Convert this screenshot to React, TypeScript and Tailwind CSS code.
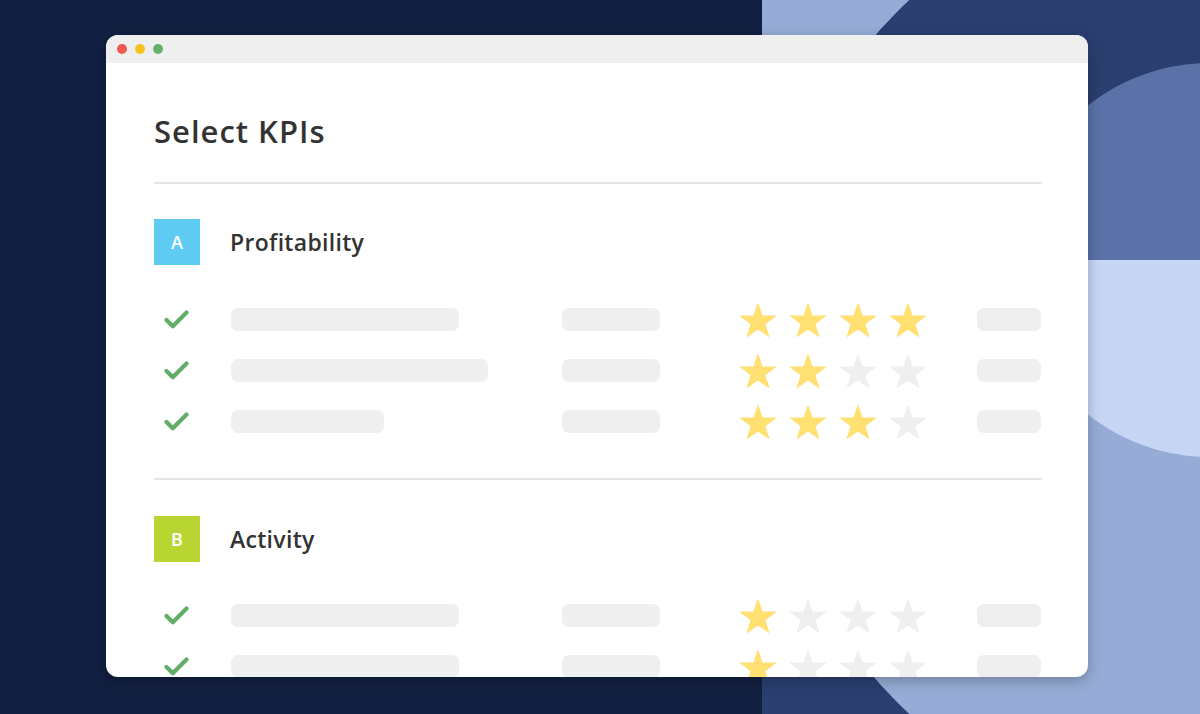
import React from "react";

const STAR = "18,0.6 22.24,13.06 35.6,13.06 24.87,21.13 28.9,33.6 18,26.12 7.1,33.6 11.13,21.13 0.4,13.06 13.76,13.06";

function Star({ on }: { on: boolean }) {
  const c = on ? "#ffe071" : "#efefef";
  return (
    <svg width="36" height="34" viewBox="0 0 36 34" className="block">
      <polygon points={STAR} fill={c} stroke={c} strokeWidth="1" strokeLinejoin="round" />
    </svg>
  );
}

function Check() {
  return (
    <svg width="25" height="20" viewBox="0 0 25 20" className="block">
      <path d="M2.5 10 L8.8 16.2 L22.5 2.5" fill="none" stroke="#63ad66" strokeWidth="4.2" strokeLinecap="round" strokeLinejoin="round" />
    </svg>
  );
}

function Row({ w, stars }: { w: number; stars: number }) {
  return (
    <div className="flex h-[51px] items-center">
      <div className="w-[77px] pl-[10px]">
        <Check />
      </div>
      <div className="w-[331px]">
        <div className="h-[23px] rounded-[7px] bg-[#efefef]" style={{ width: w }} />
      </div>
      <div className="h-[23px] w-[98px] rounded-[7px] bg-[#efefef]" />
      <div className="ml-[80px] flex gap-[14px]">
        {[0, 1, 2, 3].map((i) => (
          <Star key={i} on={i < stars} />
        ))}
      </div>
      <div className="ml-[51px] h-[23px] w-[64px] rounded-[7px] bg-[#efefef]" />
    </div>
  );
}

function Header({ letter, color, title }: { letter: string; color: string; title: string }) {
  return (
    <div className="flex h-[46px] items-center">
      <div
        className={`flex h-[46px] w-[46px] items-center justify-center text-[18px] font-semibold text-white ${color}`}
      >
        {letter}
      </div>
      <div className="ml-[30px] text-[23px] font-semibold tracking-[0.3px] text-[#333333]">{title}</div>
    </div>
  );
}

export default function App() {
  return (
    <div
      className="relative h-[714px] w-[1200px] overflow-hidden bg-[#111f41]"
      style={{ fontFamily: "'Open Sans', Lato, sans-serif" }}
    >
      <svg
        className="absolute left-[762px] top-0"
        width="438"
        height="714"
        viewBox="0 0 438 714"
      >
        <defs>
          <clipPath id="top">
            <rect x="0" y="0" width="438" height="260" />
          </clipPath>
          <clipPath id="bot">
            <rect x="0" y="260" width="438" height="454" />
          </clipPath>
        </defs>
        <rect x="0" y="0" width="438" height="260" fill="#96acd6" />
        <rect x="0" y="260" width="438" height="454" fill="#2a3f70" />
        <circle cx="480" cy="357" r="488" fill="#2a3f70" clipPath="url(#top)" />
        <circle cx="480" cy="357" r="488" fill="#96acd6" clipPath="url(#bot)" />
        <circle cx="448" cy="260" r="197" fill="#5a72a8" clipPath="url(#top)" />
        <circle cx="448" cy="260" r="197" fill="#c8d6f5" clipPath="url(#bot)" />
      </svg>

      <div className="relative pl-[106px] pt-[35px]">
        <div className="h-[642px] w-[982px] overflow-hidden rounded-[12px] bg-white shadow-[0_4px_14px_rgba(0,0,0,0.25)]">
          <div className="flex h-[28px] items-center gap-[8px] bg-[#efefef] pl-[11px]">
            <div className="h-[10px] w-[10px] rounded-full bg-[#f0574e]" />
            <div className="h-[10px] w-[10px] rounded-full bg-[#f6c31b]" />
            <div className="h-[10px] w-[10px] rounded-full bg-[#65b06a]" />
          </div>
          <div className="pl-[48px] pr-[46px]">
            <div className="mt-[50px] h-[36px] text-[31px] font-semibold leading-[36px] tracking-[1px] text-[#333333]">
              Select KPIs
            </div>
            <div className="mt-[33px] h-[2px] bg-[#e6e6e6]" />
            <div className="mt-[35px]">
              <Header letter="A" color="bg-[#5ecbf3]" title="Profitability" />
            </div>
            <div className="mt-[29px]">
              <Row w={228} stars={4} />
              <Row w={257} stars={2} />
              <Row w={153} stars={3} />
            </div>
            <div className="mt-[31px] h-[2px] bg-[#e6e6e6]" />
            <div className="mt-[36px]">
              <Header letter="B" color="bg-[#b9d532]" title="Activity" />
            </div>
            <div className="mt-[28px]">
              <Row w={228} stars={1} />
              <Row w={228} stars={1} />
            </div>
          </div>
        </div>
      </div>
    </div>
  );
}
